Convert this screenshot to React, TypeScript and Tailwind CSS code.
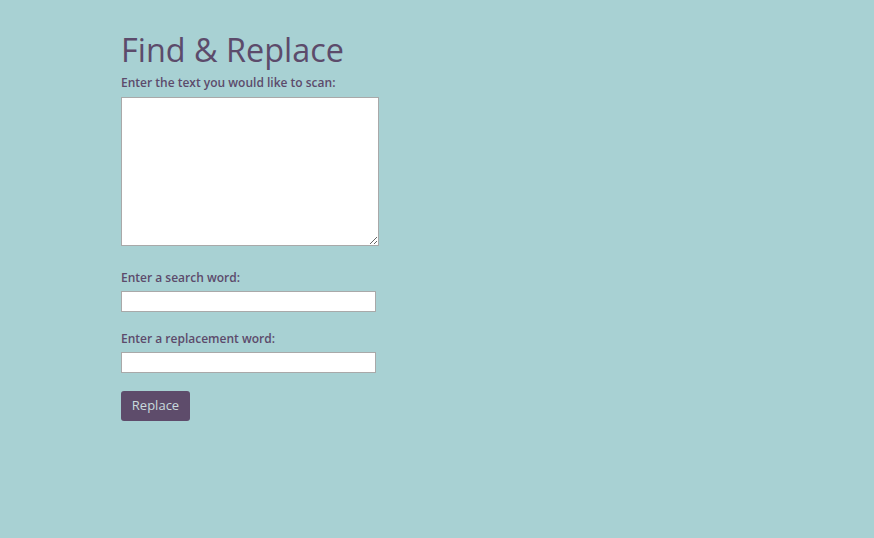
export default function App() {
  return (
    <div className="min-h-[538px] w-full bg-[#a8d1d3] font-['Open_Sans',sans-serif] text-[#5c4b6b]">
      <div className="pl-[121px] pt-[31px] flex flex-col items-start">
        <h1 className="text-[32.4px] leading-[36px] font-normal">Find &amp; Replace</h1>
        <label className="mt-[7px] text-[12px] leading-[17px] font-semibold">Enter the text you would like to scan:</label>
        <textarea className="mt-[6px] w-[258px] h-[149px] bg-white border border-[#a9a9a9] block" />
        <label className="mt-[23px] text-[12px] leading-[17px] font-semibold">Enter a search word:</label>
        <input className="mt-[5px] w-[255px] h-[21px] bg-white border border-[#a9a9a9] block" />
        <label className="mt-[18px] text-[12px] leading-[17px] font-semibold">Enter a replacement word:</label>
        <input className="mt-[5px] w-[255px] h-[21px] bg-white border border-[#a9a9a9] block" />
        <button className="mt-[18px] w-[69px] h-[30px] rounded-[3px] bg-[#5e4c6b] text-[#c9dadd] text-[13px]">Replace</button>
      </div>
    </div>
  );
}
